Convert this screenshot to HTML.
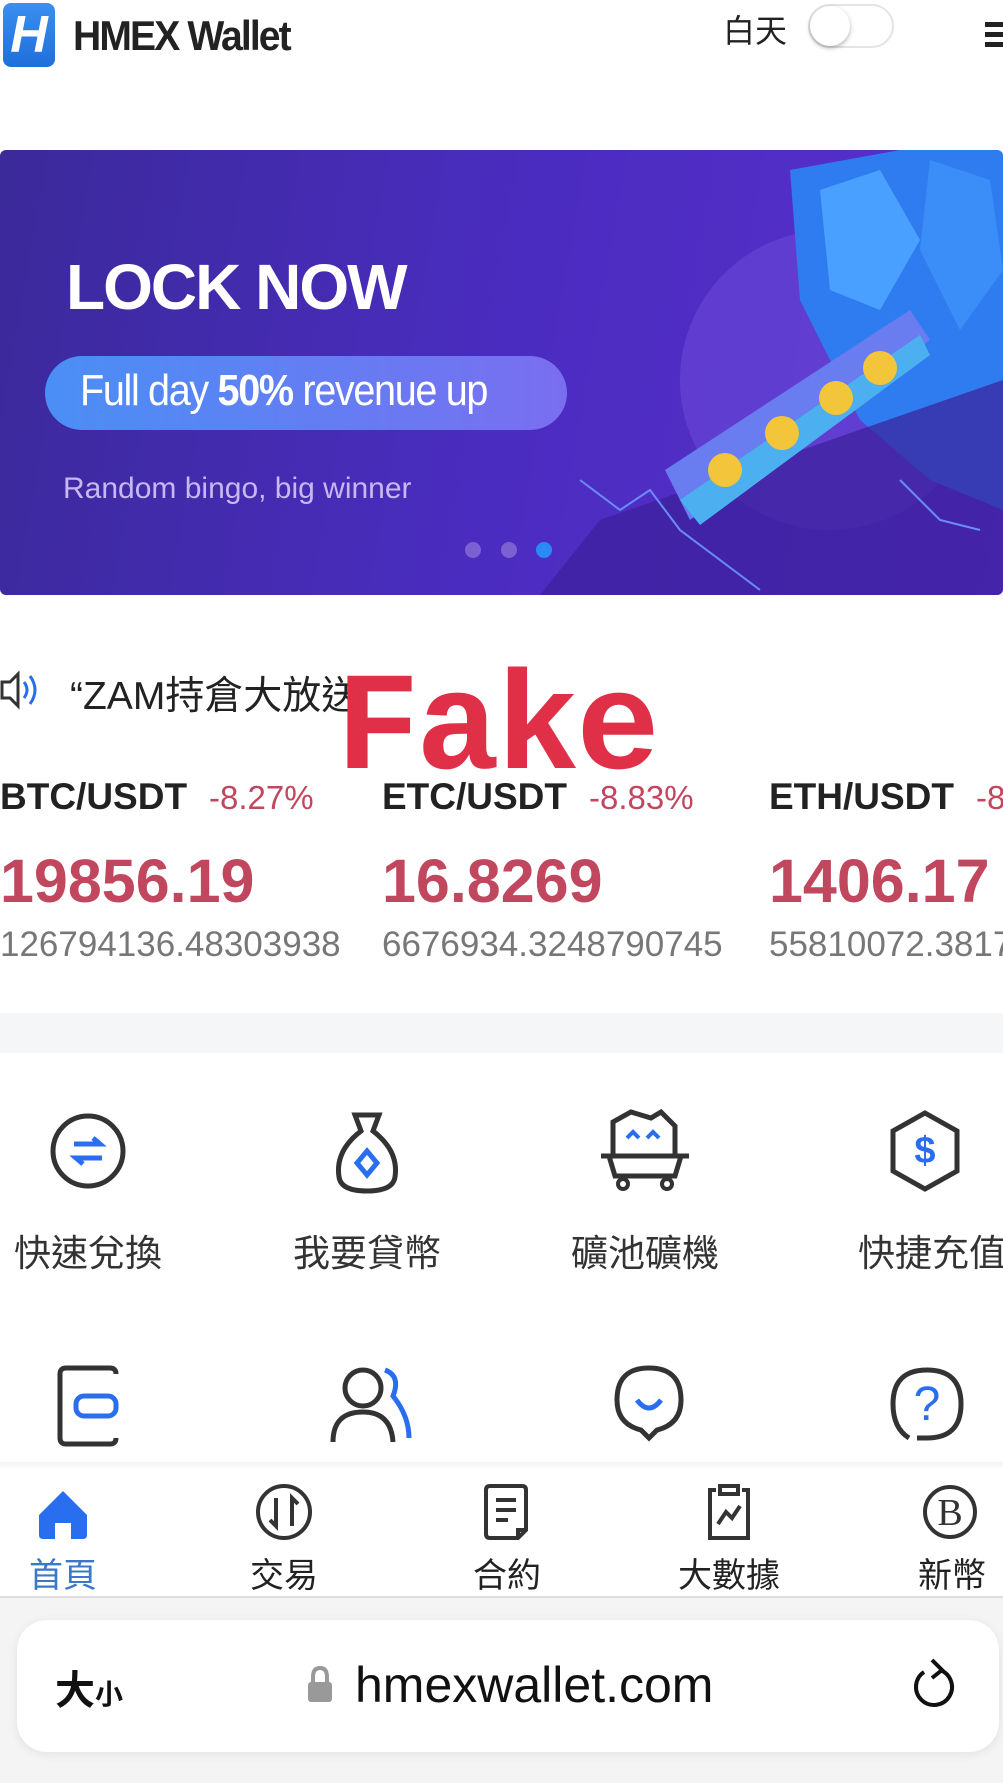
<!DOCTYPE html>
<html><head><meta charset="utf-8"><style>
*{margin:0;padding:0;box-sizing:border-box}
body{width:1003px;height:1783px;overflow:hidden;background:#fff;font-family:"Liberation Sans","Noto Sans CJK TC",sans-serif;position:relative}
.a{position:absolute;white-space:nowrap}
.pair{font-size:37px;font-weight:bold;color:#222}
.pct{font-size:33px;color:#c0475e;margin-left:22px;font-weight:normal}
.price{font-size:61px;font-weight:bold;color:#c0475e}
.vol{font-size:35px;color:#777}
.lbl{font-size:37px;color:#333;transform:translateX(-50%)}
.nl{font-size:34px;color:#222;transform:translateX(-50%)}
svg{position:absolute}
</style></head><body>
<!-- header -->
<div class="a" style="left:3px;top:3px;width:52px;height:64px;border-radius:8px;background:linear-gradient(#3a8ff0,#1f6fdc);color:#fff;font:italic bold 52px 'Liberation Sans';text-align:center;line-height:64px">H</div>
<div class="a" style="left:73px;top:12px;font-size:42px;font-weight:bold;color:#222;letter-spacing:-2px;transform:scaleX(.93);transform-origin:left">HMEX Wallet</div>
<div class="a" style="left:723px;top:6px;font-size:32px;color:#222">白天</div>
<div class="a" style="left:808px;top:4px;width:86px;height:44px;border-radius:22px;border:2px solid #e4e4e4;background:#fff"></div>
<div class="a" style="left:810px;top:6px;width:40px;height:40px;border-radius:20px;background:#fff;box-shadow:0 2px 5px rgba(0,0,0,.3)"></div>
<div class="a" style="left:985px;top:22px;width:18px;height:5px;background:#222;box-shadow:0 10px 0 #222,0 20px 0 #222"></div>
<!-- banner -->
<div class="a" style="left:0;top:150px;width:1003px;height:445px;background:linear-gradient(100deg,#3b2a9a 0%,#4a2cc0 50%,#5a30cc 100%);overflow:hidden;border-radius:6px">
 <div class="a" style="left:680px;top:80px;width:300px;height:300px;border-radius:50%;background:#6a48d8;opacity:.6"></div>
 <svg width="1003" height="445" style="left:0;top:0">
  <polygon points="790,20 900,0 1003,0 1003,360 930,330 860,270 800,150" fill="#2f7cf0"/>
  <polygon points="820,40 880,20 920,90 880,160 830,140" fill="#4aa0ff"/>
  <polygon points="930,10 990,30 1003,120 960,180 920,100" fill="#3b8df8"/>
  <polygon points="600,370 1003,230 1003,445 540,445" fill="#3a1f9a" opacity=".7"/>
  <polygon points="665,320 910,160 930,190 690,370" fill="#6a7df0"/>
  <polygon points="680,350 920,185 930,205 700,375" fill="#4cb0f0"/>
  <g fill="#f2c53a"><circle cx="725" cy="320" r="17"/><circle cx="782" cy="283" r="17"/><circle cx="836" cy="248" r="17"/><circle cx="880" cy="218" r="17"/></g>
  <g stroke="#6a8cf8" stroke-width="2" fill="none"><path d="M580,330 L620,360 L650,340 L680,380 L760,440"/><path d="M900,330 L940,370 L980,380"/></g>
 </svg>
 <div class="a" style="left:66px;top:100px;font-size:64px;font-weight:bold;color:#fff;letter-spacing:-2px">LOCK NOW</div>
 <div class="a" style="left:45px;top:206px;width:522px;height:74px;border-radius:37px;background:linear-gradient(90deg,#4a8ff5,#7a6ef0)"></div>
 <div class="a" style="left:80px;top:216px;font-size:44px;color:#fff;letter-spacing:-1.5px;transform:scaleX(.9);transform-origin:left">Full day <b>50%</b> revenue up</div>
 <div class="a" style="left:63px;top:322px;font-size:30px;color:#c8b8f0">Random bingo, big winner</div>
 <div class="a" style="left:465px;top:392px;width:16px;height:16px;border-radius:8px;background:#7a60d0;box-shadow:36px 0 0 #7a60d0"></div>
 <div class="a" style="left:536px;top:392px;width:16px;height:16px;border-radius:8px;background:#2a8af5"></div>
</div>
<!-- notice -->
<svg width="40" height="40" style="left:0;top:670px"><path d="M2,12 H10 L18,4 V36 L10,28 H2 Z" fill="none" stroke="#333" stroke-width="3"/><path d="M24,12 Q30,20 24,28 M30,6 Q40,20 30,34" fill="none" stroke="#2a6ef0" stroke-width="3"/></svg>
<div class="a" style="left:70px;top:665px;font-size:39px;color:#222">“ZAM持倉大放送”</div>
<div class="a" style="left:336px;top:652px;font:bold 140px 'Liberation Mono',monospace;color:#e03048;letter-spacing:-4px">Fake</div>
<!-- tickers -->
<div class="a pair" style="left:0;top:776px">BTC/USDT<span class="pct">-8.27%</span></div>
<div class="a pair" style="left:382px;top:776px">ETC/USDT<span class="pct">-8.83%</span></div>
<div class="a pair" style="left:769px;top:776px">ETH/USDT<span class="pct">-8.</span></div>
<div class="a price" style="left:0;top:846px">19856.19</div>
<div class="a price" style="left:382px;top:846px">16.8269</div>
<div class="a price" style="left:769px;top:846px">1406.17</div>
<div class="a vol" style="left:0;top:925px">126794136.48303938</div>
<div class="a vol" style="left:382px;top:925px">6676934.3248790745</div>
<div class="a vol" style="left:769px;top:925px">55810072.3817</div>
<div class="a" style="left:0;top:1013px;width:1003px;height:40px;background:#f5f6f8"></div>
<!-- icon row 1 -->
<svg width="80" height="80" style="left:48px;top:1111px"><circle cx="40" cy="40" r="35" fill="none" stroke="#333" stroke-width="5"/><path d="M26,33 H52 L45,27 M54,47 H28 L35,53" fill="none" stroke="#2a6ef0" stroke-width="5"/></svg>
<svg width="80" height="84" style="left:327px;top:1111px"><path d="M28,4 H52 L46,20 Q72,40 68,66 Q66,80 40,80 Q14,80 12,66 Q8,40 34,20 Z" fill="none" stroke="#333" stroke-width="5"/><path d="M40,40 L50,52 L40,64 L30,52 Z" fill="none" stroke="#2a6ef0" stroke-width="5"/></svg>
<svg width="96" height="84" style="left:597px;top:1108px"><path d="M16,46 V14 L34,4 L54,10 L64,4 L78,18 V46" fill="none" stroke="#333" stroke-width="5"/><path d="M4,48 H92 M12,48 L18,68 H78 L84,48" fill="none" stroke="#333" stroke-width="5"/><circle cx="26" cy="76" r="5" fill="none" stroke="#333" stroke-width="4"/><circle cx="70" cy="76" r="5" fill="none" stroke="#333" stroke-width="4"/><path d="M30,30 L36,24 L42,30 M50,30 L56,24 L62,30" fill="none" stroke="#2a6ef0" stroke-width="4"/></svg>
<svg width="80" height="84" style="left:885px;top:1109px"><path d="M40,4 L72,22 V62 L40,80 L8,62 V22 Z" fill="none" stroke="#333" stroke-width="5"/><text x="40" y="54" font-family="Liberation Sans" font-size="38" font-weight="bold" fill="#2a6ef0" text-anchor="middle">$</text></svg>
<div class="a lbl" style="left:88px;top:1223px">快速兌換</div>
<div class="a lbl" style="left:367px;top:1223px">我要貸幣</div>
<div class="a lbl" style="left:645px;top:1223px">礦池礦機</div>
<div class="a lbl" style="left:932px;top:1223px">快捷充值</div>
<!-- icon row 2 -->
<svg width="70" height="84" style="left:54px;top:1364px"><path d="M62,10 Q62,4 56,4 H12 Q6,4 6,10 V74 Q6,80 12,80 H56 Q62,80 62,74" fill="none" stroke="#333" stroke-width="5"/><rect x="22" y="32" width="40" height="20" rx="8" fill="none" stroke="#2a6ef0" stroke-width="5"/></svg>
<svg width="90" height="84" style="left:325px;top:1362px"><circle cx="38" cy="26" r="18" fill="none" stroke="#333" stroke-width="5"/><path d="M8,80 Q8,50 38,50 Q66,50 68,80" fill="none" stroke="#333" stroke-width="5"/><path d="M60,8 Q76,14 68,34 Q84,54 84,76" fill="none" stroke="#2a6ef0" stroke-width="5"/></svg>
<svg width="76" height="84" style="left:611px;top:1362px"><path d="M38,76 L30,68 Q6,62 6,38 Q6,6 38,6 Q70,6 70,38 Q70,62 46,68 Z" fill="none" stroke="#333" stroke-width="5"/><path d="M26,38 Q38,54 50,38" fill="none" stroke="#2a6ef0" stroke-width="5"/></svg>
<svg width="76" height="84" style="left:889px;top:1364px"><path d="M20,74 Q4,64 4,40 Q4,6 38,6 Q72,6 72,40 Q72,74 38,74 H28" fill="none" stroke="#333" stroke-width="5"/><text x="38" y="56" font-family="Liberation Sans" font-size="48" fill="#2a6ef0" text-anchor="middle">?</text></svg>
<!-- nav -->
<div class="a" style="left:0;top:1462px;width:1003px;height:8px;background:linear-gradient(#f2f3f5,#fff)"></div>
<svg width="56" height="56" style="left:35px;top:1487px"><path d="M28,4 L52,28 V48 Q52,52 48,52 H36 V36 H20 V52 H8 Q4,52 4,48 V28 Z" fill="#2a6ef0"/></svg>
<svg width="60" height="60" style="left:254px;top:1482px"><circle cx="30" cy="30" r="26" fill="none" stroke="#333" stroke-width="4"/><path d="M22,16 V44 L16,38 M38,44 V16 L44,22" fill="none" stroke="#333" stroke-width="4"/></svg>
<svg width="50" height="60" style="left:482px;top:1482px"><path d="M36,56 H8 Q4,56 4,52 V8 Q4,4 8,4 H40 Q44,4 44,8 V48 Z M36,56 V48 H44" fill="none" stroke="#333" stroke-width="4"/><path d="M14,18 H34 M14,28 H34 M14,38 H26" stroke="#333" stroke-width="4"/></svg>
<svg width="50" height="62" style="left:704px;top:1480px"><path d="M12,10 H6 V58 H44 V10 H38 M16,6 H34 V14 H16 Z" fill="none" stroke="#333" stroke-width="4"/><path d="M14,44 L22,32 L28,38 L36,26" fill="none" stroke="#333" stroke-width="4"/></svg>
<svg width="56" height="56" style="left:922px;top:1484px"><circle cx="28" cy="28" r="25" fill="none" stroke="#333" stroke-width="4"/><text x="28" y="41" font-family="Liberation Serif" font-size="38" fill="#333" text-anchor="middle">B</text></svg>
<div class="a nl" style="left:63px;top:1548px;color:#3a78c8">首頁</div>
<div class="a nl" style="left:284px;top:1548px">交易</div>
<div class="a nl" style="left:507px;top:1548px">合約</div>
<div class="a nl" style="left:729px;top:1548px">大數據</div>
<div class="a nl" style="left:952px;top:1548px">新幣</div>
<!-- browser bar -->
<div class="a" style="left:0;top:1596px;width:1003px;height:187px;background:#f4f4f4;border-top:2px solid #ddd"></div>
<div class="a" style="left:17px;top:1620px;width:982px;height:132px;border-radius:30px;background:#fff;box-shadow:0 2px 10px rgba(0,0,0,.08)"></div>
<div class="a" style="left:55px;top:1658px;font-size:40px;color:#111;font-weight:bold">大<span style="font-size:28px">小</span></div>
<svg width="30" height="40" style="left:305px;top:1665px"><path d="M8,18 V12 Q8,3 15,3 Q22,3 22,12 V18" fill="none" stroke="#999" stroke-width="4"/><rect x="3" y="17" width="24" height="20" rx="3" fill="#999"/></svg>
<div class="a" style="left:355px;top:1656px;font-size:50px;color:#111">hmexwallet.com</div>
<svg width="50" height="60" style="left:908px;top:1656px"><path d="M32,14 A18,18 0 1 1 16,16" fill="none" stroke="#111" stroke-width="4"/><path d="M24,4 L34,14 L24,22" fill="none" stroke="#111" stroke-width="4"/></svg>
</body></html>
